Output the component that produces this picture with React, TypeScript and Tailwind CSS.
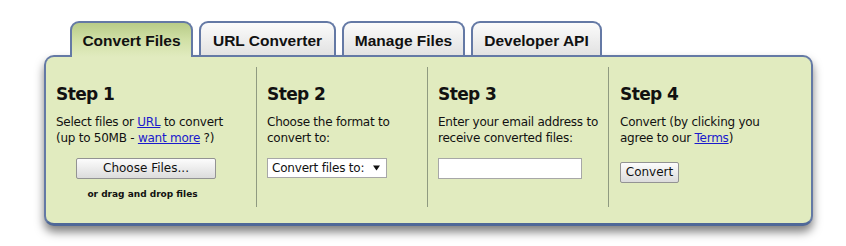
import React from "react";

const body = "[font-family:'DejaVu_Sans',sans-serif]";

function Tab({ label, w, active }: { label: string; w: string; active?: boolean }) {
  return (
    <div
      className={
        "relative flex justify-center rounded-t-[9px] border-2 border-b-0 border-[#6479a5] pt-[9px] text-[15.5px] leading-[18px] font-bold text-[#111] [font-family:'Liberation_Sans',Arial,sans-serif] " +
        w +
        (active
          ? " z-10 h-[36px] -mb-[2px] bg-gradient-to-b from-[#b8cc88] via-[#d1e0a6] to-[#e1ebbf]"
          : " h-[34px] bg-gradient-to-b from-[#fbfbfb] to-[#e2e2e2]")
      }
    >
      {label}
    </div>
  );
}

function Btn({ children, w }: { children: React.ReactNode; w: string }) {
  return (
    <button
      className={
        "h-[21px] rounded-[2px] border border-[#939393] bg-gradient-to-b from-[#fcfcfc] to-[#dcdcdc] text-[12px] leading-[19px] text-[#111] " +
        body +
        " " +
        w
      }
    >
      {children}
    </button>
  );
}

function Heading({ children }: { children: React.ReactNode }) {
  return (
    <div className="text-[17px] leading-[20px] font-bold tracking-[-0.6px] text-[#111] [font-family:'DejaVu_Sans',sans-serif]">
      {children}
    </div>
  );
}

function Text({ children }: { children: React.ReactNode }) {
  return (
    <div className="mt-[10px] text-[12px] leading-[16px] tracking-[-0.25px] text-[#111] [font-family:'DejaVu_Sans',sans-serif]">
      {children}
    </div>
  );
}

const link = "text-[#1a1acc] underline";

export default function App() {
  return (
    <div className="h-[246px] w-[846px] bg-white pl-[44px] pt-[21px]">
      <div className="ml-[26px] flex items-end gap-[6px]">
        <Tab label="Convert Files" w="w-[123px]" active />
        <Tab label="URL Converter" w="w-[137px]" />
        <Tab label="Manage Files" w="w-[123px]" />
        <Tab label="Developer API" w="w-[131px]" />
      </div>
      <div className="h-[171px] w-[769px] rounded-[10px] border-2 border-b-[3px] border-[#6479a5] border-b-[#4f6898] bg-[#e1ebbf] pt-[10px] shadow-[0_6px_10px_rgba(0,0,0,0.5)]">
        <div className="flex h-[140px]">
          <div className="w-[211px] border-r border-[#8f9a80] pl-[10px] pt-[17px]">
            <Heading>Step 1</Heading>
            <Text>
              Select files or <span className={link}>URL</span> to convert
              <br />
              (up to 50MB - <span className={link}>want more</span> ?)
            </Text>
            <div className="ml-[20px] mt-[12px] flex w-[140px] flex-col">
              <Btn w="w-[140px]">Choose Files...</Btn>
              <div className="mt-[9px] pr-[7px] text-center text-[9px] leading-[12px] font-bold text-[#111] [font-family:'DejaVu_Sans',sans-serif]">
                or drag and drop files
              </div>
            </div>
          </div>
          <div className="w-[171px] border-r border-[#8f9a80] pl-[10px] pt-[17px]">
            <Heading>Step 2</Heading>
            <Text>
              Choose the format to
              <br />
              convert to:
            </Text>
            <div className="mt-[12px] flex h-[20px] w-[120px] items-center justify-between border border-[#a7a7a7] bg-white pl-[4px] pr-[6px] text-[12px] tracking-[-0.2px] text-[#111] [font-family:'DejaVu_Sans',sans-serif]">
              <span>Convert files to:</span>
              <svg width="7" height="6" viewBox="0 0 7 6">
                <path d="M0 0.5 H7 L3.5 5.5 Z" fill="#111" />
              </svg>
            </div>
          </div>
          <div className="w-[181px] border-r border-[#8f9a80] pl-[10px] pt-[17px]">
            <Heading>Step 3</Heading>
            <Text>
              Enter your email address to
              <br />
              receive converted files:
            </Text>
            <div className="mt-[12px] h-[21px] w-[144px] border border-[#a7a7a7] bg-white" />
          </div>
          <div className="flex-1 pl-[11px] pt-[17px]">
            <Heading>Step 4</Heading>
            <Text>
              Convert (by clicking you
              <br />
              agree to our <span className={link}>Terms</span>)
            </Text>
            <div className="mt-[12px]">
              <Btn w="w-[59px]">Convert</Btn>
            </div>
          </div>
        </div>
      </div>
    </div>
  );
}
